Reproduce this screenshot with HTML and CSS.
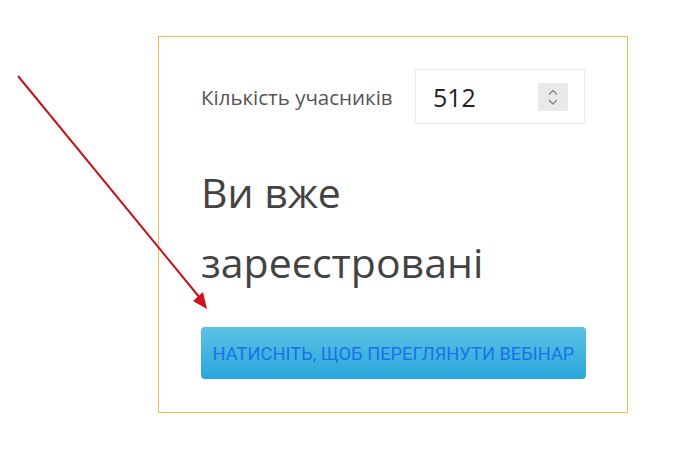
FILE: index.html
```html
<!DOCTYPE html>
<html lang="uk">
<head>
<meta charset="utf-8">
<link rel="stylesheet" href="styles.css">
</head>
<body>
<div class="page">
  <div class="card">
    <div class="row">
      <span class="label">Кількість учасників</span>
      <div class="field">
        <span class="value">512</span>
        <span class="spin">
          <svg width="30" height="28" viewBox="0 0 30 28"><path d="M11 11.5 L15 7.5 L19 11.5" fill="none" stroke="#8a8a8e" stroke-width="1.4"/><path d="M11 17 L15 21 L19 17" fill="none" stroke="#8a8a8e" stroke-width="1.4"/></svg>
        </span>
      </div>
    </div>
    <h1 class="title">Ви вже зареєстровані</h1>
    <button class="btn">НАТИСНІТЬ, ЩОБ ПЕРЕГЛЯНУТИ ВЕБІНАР</button>
  </div>
  <svg class="arrow" width="220" height="320" viewBox="0 0 220 320">
    <line x1="18" y1="76" x2="200" y2="298" stroke="#c0151a" stroke-width="2"/>
    <path d="M207 309 L193 301 L203 292 Z" fill="#d0101a"/>
  </svg>
</div>
</body>
</html>
```
FILE: styles.css
```css
html, body { margin: 0; padding: 0; background: #fff; }
body { font-family: "Open Sans", "Noto Sans", sans-serif; color: #444; }
.page { position: relative; width: 678px; height: 449px; padding-top: 36px; box-sizing: border-box; }
.card {
  margin-left: 158px;
  width: 470px;
  height: 377px;
  box-sizing: border-box;
  border: 1px solid #eebf4a;
  padding: 32px 42px 0 42px;
}
.row { display: flex; align-items: center; }
.label { font-size: 20.5px; color: #555; white-space: nowrap; }
.field {
  flex: none;
  margin-left: auto;
  width: 170px; height: 55px; box-sizing: border-box;
  border: 1px solid #ececec;
  display: flex; align-items: center; justify-content: space-between;
  padding: 0 16px 0 17px;
}
.value { font-size: 25px; color: #222; }
.spin { width: 30px; height: 28px; background: #e9e9eb; display: block; }
.spin svg { display: block; }
.title {
  margin: 33px 0 0 0;
  font-weight: 400;
  font-size: 41px;
  line-height: 70px;
  color: #434343;
  width: 320px;
}
.btn {
  margin-top: 30px;
  display: block;
  width: 385px;
  height: 52px;
  border: none;
  border-radius: 4px;
  background: linear-gradient(#5cc3e4, #2aa6dc);
  color: #1a72e6;
  font-family: "Roboto", sans-serif;
  font-size: 18.3px;
  padding: 0;
  text-align: center;
}
.arrow { position: absolute; left: 0; top: 0; }
```
